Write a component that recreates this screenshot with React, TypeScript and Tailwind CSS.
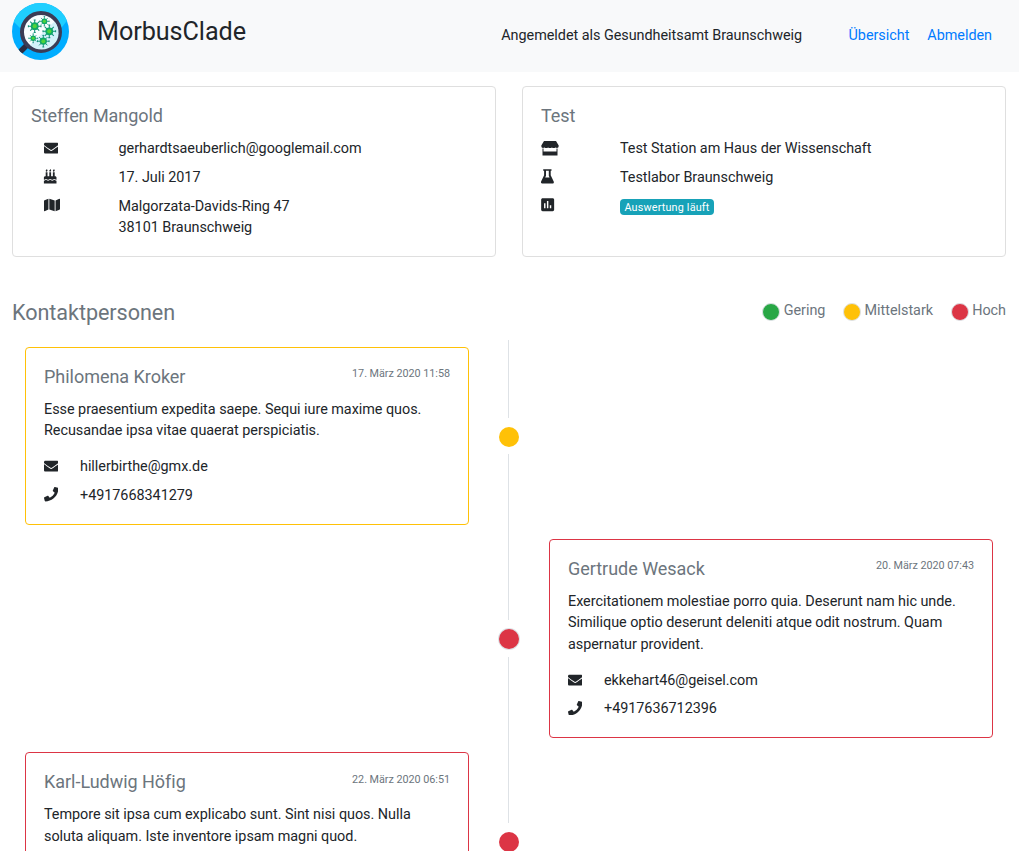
import React from "react";
import { FaEnvelope, FaBirthdayCake, FaMap, FaPhone } from "react-icons/fa";
import { MdAssessment } from "react-icons/md";

type Level = "low" | "mid" | "high";

const dotColor: Record<Level, string> = {
  low: "bg-[#28a745]",
  mid: "bg-[#ffc107]",
  high: "bg-[#dc3545]",
};

const virusSpots = [
  { x: 26.7, y: 26.2, s: 1 },
  { x: 36.4, y: 21.3, s: 0.75 },
  { x: 41.3, y: 31.3, s: 1 },
  { x: 25.2, y: 38.3, s: 0.7 },
  { x: 35.3, y: 41.2, s: 0.92 },
];

function Logo() {
  return (
    <svg className="size-[58px] shrink-0" viewBox="3 3 58 58">
      <defs>
        <clipPath id="disc">
          <circle cx="32.5" cy="31.5" r="28.5" />
        </clipPath>
      </defs>
      <g clipPath="url(#disc)">
        <rect width="66" height="66" fill="#00adff" />
        <path d="M0 0h66v12L50 32H16L4 20z" fill="#1fcfff" />
        <path d="M21 43 10 54" stroke="#2b2d42" strokeWidth="5.5" />
        <circle cx="33" cy="32" r="19" fill="#f8fdff" stroke="#3b3c56" strokeWidth="4" />
        <path d="M46.5 21.5A17 17 0 0 1 22 45z" fill="#d3f1fa" />
      </g>
      {virusSpots.map((v) => (
        <g key={v.x} transform={`translate(${v.x} ${v.y}) scale(${v.s})`}>
          <path
            d="M0-6.3V6.3M-6.3 0H6.3M-4.5-4.5 4.5 4.5M4.5-4.5-4.5 4.5M-1-6.3h2M-1 6.3h2M-6.3-1v2M6.3-1v2"
            stroke="#12907a"
            strokeWidth="1.05"
          />
          <circle r="3.9" fill="#10a868" />
          <circle r="2.1" fill="#4fd43a" />
        </g>
      ))}
    </svg>
  );
}

function StoreIcon() {
  return (
    <svg className="mt-px h-[15px] w-[18px]" viewBox="0 0 18 15" fill="#212529">
      <path d="M3 .1h12l2.700 4.400c0 1.800-.7 2.500-1.700 2.500-.7 0-1-.3-1.500-.5-.6.4-1.200.5-1.800.5s-1.200-.1-1.800-.5c-.6.4-1.200.5-1.900.5s-1.300-.1-1.900-.5c-.6.4-1.200.5-1.800.5s-1.200-.1-1.800-.5C3 6.800 2.700 7 2 7 1 7 .3 6.300.3 4.500z" />
      <path d="M1.500 7.500h1v3h13v-3h1v7h-15z" />
    </svg>
  );
}

function FlaskIcon() {
  return (
    <svg className="h-[15px] w-[13px]" viewBox="0 0 13 15" fill="#212529" fillRule="evenodd">
      <path d="M2.200.2h8.300v1.500h-.8v4.500l3 6.300c.5 1.100-.1 2-1.200 2H1.300c-1.100 0-1.700-.9-1.200-2l3-6.300V1.700h-.9zM5 1.700v5L4.200 8.400h4.400L7.800 6.700v-5z" />
    </svg>
  );
}

function LegendDot({ level }: { level: Level }) {
  return (
    <span
      className={`mt-[4px] size-[18px] shrink-0 rounded-full border border-[#dee2e6] ${dotColor[level]}`}
    />
  );
}

interface Contact {
  name: string;
  date: string;
  text: string[];
  mail?: string;
  phone?: string;
}

function ContactCard({ c, border }: { c: Contact; border: string }) {
  return (
    <article className={`min-h-[178px] w-[444px] rounded-[4px] border px-[18px] pt-[18px] pb-[17.1px] ${border}`}>
      <header className="flex h-[22px] items-start justify-between">
        <h5 className="text-[18px] leading-[22px] text-[#6c757d]">{c.name}</h5>
        <time className="pt-[1.2px] text-[10.8px] leading-[13px] text-[#6c757d]">{c.date}</time>
      </header>
      <p className="mt-[10.7px]">
        {c.text.map((t) => (
          <span key={t} className="block whitespace-nowrap">
            {t}
          </span>
        ))}
      </p>
      {c.mail && (
        <div className="mt-[14.4px] flex">
          <span className="flex h-[20px] w-9 items-center"><FaEnvelope /></span>
          <span>{c.mail}</span>
        </div>
      )}
      {c.phone && (
        <div className="mt-[7px] flex">
          <span className="flex h-[19.4px] w-9 items-center"><FaPhone /></span>
          <span>{c.phone}</span>
        </div>
      )}
    </article>
  );
}

const contacts: Contact[] = [
  {
    name: "Philomena Kroker",
    date: "17. März 2020 11:58",
    text: ["Esse praesentium expedita saepe. Sequi iure maxime quos.", "Recusandae ipsa vitae quaerat perspiciatis."],
    mail: "hillerbirthe@gmx.de",
    phone: "+4917668341279",
  },
  {
    name: "Gertrude Wesack",
    date: "20. März 2020 07:43",
    text: ["Exercitationem molestiae porro quia. Deserunt nam hic unde.", "Similique optio deserunt deleniti atque odit nostrum. Quam", "aspernatur provident."],
    mail: "ekkehart46@geisel.com",
    phone: "+4917636712396",
  },
  {
    name: "Karl-Ludwig Höfig",
    date: "22. März 2020 06:51",
    text: ["Tempore sit ipsa cum explicabo sunt. Sint nisi quos. Nulla", "soluta aliquam. Iste inventore ipsam magni quod."],
  },
];

function Rail({ level, ring = "" }: { level: Level; ring?: string }) {
  return (
    <div className="flex flex-col items-center self-stretch">
      <div className="mr-px w-px flex-1 bg-[#dee2e6]" />
      <span className={`mt-[9.2px] mb-[7.4px] size-5 rounded-full ${dotColor[level]} ${ring}`} />
      <div className="mr-px w-px flex-1 bg-[#dee2e6]" />
    </div>
  );
}

export default function App() {
  return (
    <div className="h-[851px] overflow-hidden bg-white font-['Roboto',sans-serif] text-[14.4px] leading-[21.6px] tracking-[-0.03px] text-[#212529]">
      <nav className="flex h-[72px] bg-[#f8f9fa] pl-[11px] pr-[27px]">
        <div className="pt-[3px]"><Logo /></div>
        <h3 className="ml-7 pt-[17px] text-[25.2px] leading-[30px] tracking-[-0.07px]">MorbusClade</h3>
        <div className="ml-auto flex pt-[25px]">
          <span>Angemeldet als Gesundheitsamt Braunschweig</span>
          <a className="ml-[46.5px] text-[#007bff]">Übersicht</a>
          <a className="ml-[18px] text-[#007bff]">Abmelden</a>
        </div>
      </nav>

      <section className="mt-[14px] flex gap-[26px] pl-3">
        <div className="h-[171px] w-[484px] rounded-[4px] border border-[#dfdfdf] p-[18px]">
          <h5 className="text-[18px] leading-[22px] tracking-[-0.06px] text-[#6c757d]">Steffen Mangold</h5>
          <div className="mt-[11.1px] grid grid-cols-[74.5px_1fr] gap-y-[7.2px] pl-[13px]">
            <span className="flex h-[20px] items-center"><FaEnvelope /></span>
            <span>gerhardtsaeuberlich@googlemail.com</span>
            <span className="-ml-px flex h-[19px] items-center"><FaBirthdayCake /></span>
            <span>17. Juli 2017</span>
            <span className="flex h-[19px] items-center"><FaMap className="size-4" /></span>
            <span>Malgorzata-Davids-Ring 47<br />38101 Braunschweig</span>
          </div>
        </div>
        <div className="h-[171px] w-[484px] rounded-[4px] border border-[#dfdfdf] p-[18px]">
          <h5 className="text-[18px] leading-[22px] text-[#6c757d]">Test</h5>
          <div className="mt-[10.8px] grid grid-cols-[79px_1fr] gap-y-[7.2px]">
            <span className="flex h-[20px] items-center"><StoreIcon /></span>
            <span>Test Station am Haus der Wissenschaft</span>
            <span className="flex h-[19px] items-center"><FlaskIcon /></span>
            <span>Testlabor Braunschweig</span>
            <span className="-ml-[2px] flex h-[19px] items-center"><MdAssessment className="size-[17.3px]" /></span>
            <span className="mt-[3.4px] h-4 w-fit rounded-[4px] bg-[#17a2b8] px-[4.4px] text-[10.8px] leading-[17px] tracking-[0.18px] text-white">
              Auswertung läuft
            </span>
          </div>
        </div>
      </section>

      <div className="mt-[42px] flex h-[27px] justify-between pl-3 pr-[13px] text-[#6c757d]">
        <h4 className="text-[21.6px] leading-[27px] tracking-[-0.06px]">Kontaktpersonen</h4>
        <div className="flex gap-[17.6px]">
          {([["low", "Gering"], ["mid", "Mittelstark"], ["high", "Hoch"]] as [Level, string][]).map(([l, t]) => (
            <span key={l} className="flex gap-[3.6px]">
              <LegendDot level={l} />
              <span className="pt-px">{t}</span>
            </span>
          ))}
        </div>
      </div>

      <main className="mt-[14px]">
        <div className="grid h-[192px] grid-cols-[484px_50px_1fr]">
          <div className="pl-[25px] pt-[7px]"><ContactCard c={contacts[0]} border="border-[#ffc107]" /></div>
          <Rail level="mid" />
        </div>
        <div className="grid h-[213px] grid-cols-[484px_50px_1fr]">
          <div />
          <Rail level="high" ring="ring-1 ring-[#dee2e6]" />
          <div className="pl-[15px] pt-[7px]"><ContactCard c={contacts[1]} border="border-[#dc3545]" /></div>
        </div>
        <div className="grid h-[192px] grid-cols-[484px_50px_1fr]">
          <div className="pl-[25px] pt-[7.4px]"><ContactCard c={contacts[2]} border="border-[#dc3545]" /></div>
          <Rail level="high" />
        </div>
      </main>
    </div>
  );
}
